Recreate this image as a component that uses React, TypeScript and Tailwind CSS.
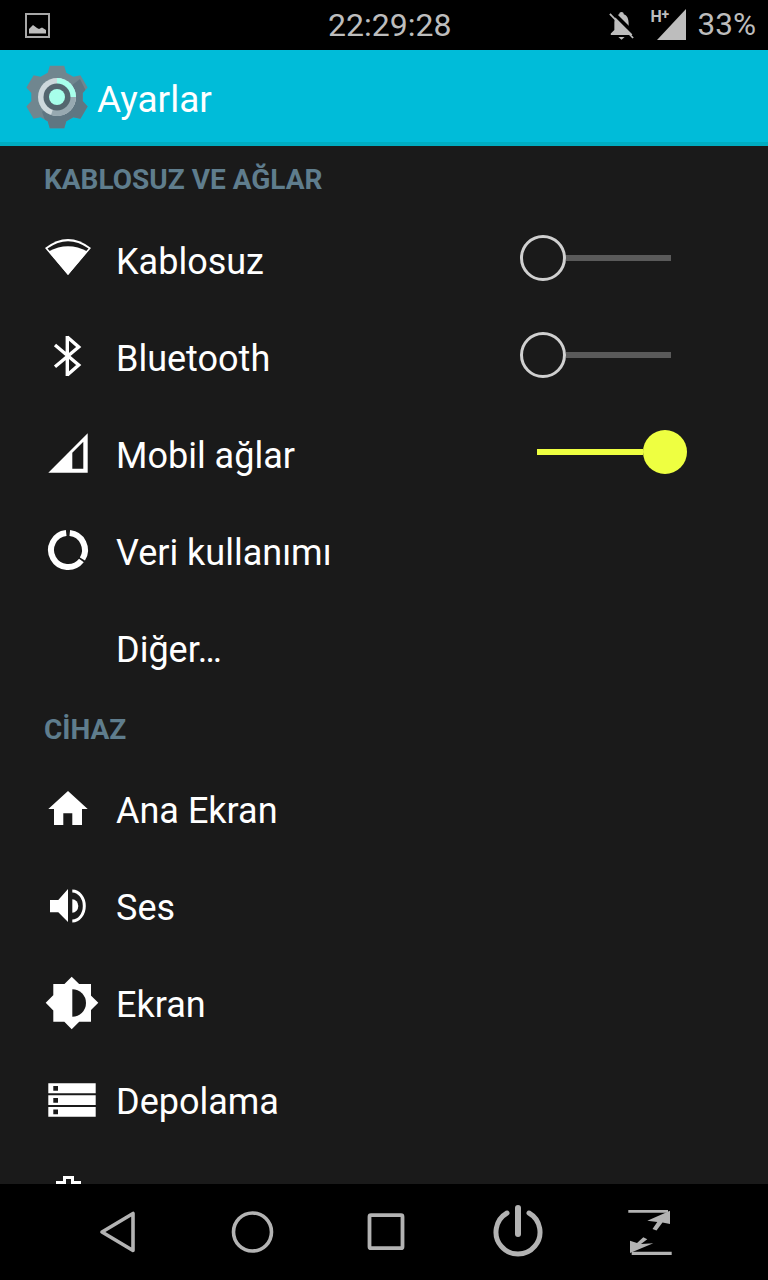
const BG = "#1a1a1a";

function gearPoints() {
  const pts: string[] = [];
  const cx = 37, cy = 38;
  for (let i = 0; i < 6; i++) {
    const a = (i * 60 - 90) * Math.PI / 180;
    const t = (o: number, r: number) => {
      const b = a + (o * Math.PI) / 180;
      pts.push(`${(cx + r * Math.cos(b)).toFixed(1)},${(cy + r * Math.sin(b)).toFixed(1)}`);
    };
    t(-21, 26); t(-13, 32); t(13, 32); t(21, 26);
  }
  return pts.join(" ");
}

function Gear() {
  const p = gearPoints();
  return (
    <svg width="75" height="75" viewBox="0 0 75 75" className="ml-[20px] mt-[-2px] shrink-0">
      <defs>
        <clipPath id="gearClip"><polygon points={p} /></clipPath>
      </defs>
      <polygon points={p} fill="#70868f" />
      <polygon points="37,38 60,20 75,50 50,75 30,75 22,53" fill="#5f7682" clipPath="url(#gearClip)" />
      <circle cx="37" cy="38" r="19" fill="#cdd8dc" />
      <path d="M37,38 L56,38 A19,19 0 0 1 31,56 Z" fill="#97a9b1" />
      <path d="M37,38 L37,19 A19,19 0 0 1 56,38 Z" fill="#a7ffeb" />
      <circle cx="37" cy="38" r="13.5" fill="#54666f" />
      <circle cx="37" cy="38" r="8" fill="#a7ffeb" />
    </svg>
  );
}

function Slashed() {
  return (
    <svg width="25" height="29" viewBox="0 0 28 32" className="shrink-0 mt-[1px]">
      <path d="M14,1 C15.5,1 16.5,2 16.5,3.5 C20.5,4.5 22,9 22,14 L22,21 L26,25 L26,26.5 L2,26.5 L2,25 L6,21 L6,14 C6,9 7.5,4.5 11.5,3.5 C11.5,2 12.5,1 14,1 Z" fill="#bdbdbd" />
      <path d="M10.5,29 L17.5,29 L14,32 Z" fill="#bdbdbd" />
      <path d="M3,0 L30,27" stroke="#000" strokeWidth="4" />
      <path d="M1,3 L27,30" stroke="#bdbdbd" strokeWidth="2" />
    </svg>
  );
}

function Wifi() {
  return (
    <svg width="73" height="64" viewBox="0 0 73 64">
      <path d="M1,19 Q24,1 47,19 L24,46 Z" fill="#fff" />
      <path d="M3.5,19.5 Q24,5 44.5,19.5 L24,43 Z" fill={BG} />
      <path d="M4.5,22.5 Q24,12 43.5,22.5 L24,46 Z" fill="#fff" />
    </svg>
  );
}
function Bluetooth() {
  return (
    <svg width="73" height="64" viewBox="0 0 73 64">
      <path d="M23.3,50 L23.3,10 M23.3,11 L34.7,21 L11,40.7 M11,19 L34.7,39 L23.3,49" fill="none" stroke="#fff" strokeWidth="3.4" />
    </svg>
  );
}
function Signal() {
  return (
    <svg width="73" height="64" viewBox="0 0 73 64">
      <path fillRule="evenodd" d="M4.3,49.7 L43.7,10.3 L43.7,49.7 Z M28.3,29.7 L39.3,18.7 L39.3,45.7 L28.3,45.7 Z" fill="#fff" />
    </svg>
  );
}
function DataUsage() {
  return (
    <svg width="73" height="64" viewBox="0 0 73 64">
      <path d="M25.8,13.1 A17,17 0 0 1 38.4,39 M37.4,40.5 A17,17 0 1 1 22.2,13.1" fill="none" stroke="#fff" strokeWidth="6" />
    </svg>
  );
}
function Home() {
  return (
    <svg width="73" height="64" viewBox="0 0 73 64">
      <path fillRule="evenodd" d="M24,13 L43.7,31 L38,31 L38,47 L28.3,47 L28.3,35.3 L19.3,35.3 L19.3,47 L10,47 L10,31 L4.3,31 Z" fill="#fff" />
    </svg>
  );
}
function Sound() {
  return (
    <svg width="73" height="64" viewBox="0 0 73 64">
      <path d="M6,25 L14.3,25 L24,14 L24,47 L14.3,37.3 L6,37.3 Z" fill="#fff" />
      <path d="M28.3,24.3 A6,6.7 0 0 1 28.3,37.7 Z" fill="#fff" />
      <path d="M28.3,16 A12,15 0 0 1 28.3,46" fill="none" stroke="#fff" strokeWidth="3" />
    </svg>
  );
}
function Brightness() {
  return (
    <svg width="73" height="64" viewBox="0 0 73 64">
      <path d="M9.3,12 H47 V49.7 H9.3 Z M27.7,4.7 L54.3,30.7 L27.7,57.3 L1.7,30.7 Z" fill="#fff" />
      <path d="M28.3,17.3 A13.7,13.7 0 0 1 28.3,44.7 Z" fill={BG} />
    </svg>
  );
}
function Storage() {
  return (
    <svg width="73" height="64" viewBox="0 0 73 64">
      <path fillRule="evenodd" d="M4.3,14.3 H51.7 V24.3 H4.3 Z M9.3,17 V21.7 H14 V17 Z M4.3,26.3 H51.7 V36 H4.3 Z M9.3,29 V33.7 H14 V29 Z M4.3,38 H51.7 V47.7 H4.3 Z M9.3,40.5 V45.2 H14 V40.5 Z" fill="#fff" />
    </svg>
  );
}
function Battery() {
  return (
    <svg width="73" height="64" viewBox="0 0 73 64">
      <path d="M13.5,52 V16.5 H20.5 V11.5 H28.5 V16.5 H35.5 V52 Z" fill="none" stroke="#fff" strokeWidth="3" />
    </svg>
  );
}

function SwitchOff() {
  return (
    <div className="flex items-center w-[151px] mt-[-6px]">
      <div className="w-[46px] h-[46px] rounded-full border-[3px] border-[#d0d0d0] shrink-0" />
      <div className="flex-1 h-[6px] bg-[#5a5a5a]" />
    </div>
  );
}
function SwitchOn() {
  return (
    <div className="flex items-center w-[150px] ml-[17px] mt-[-6px]">
      <div className="flex-1 h-[6px] bg-[#eeff41]" />
      <div className="w-[44px] h-[44px] rounded-full bg-[#eeff41] shrink-0" />
    </div>
  );
}

function Row({ icon, label, right }: { icon?: React.ReactNode; label: string; right?: React.ReactNode }) {
  return (
    <div className="flex items-center h-[97px] shrink-0 pl-[44px]">
      <div className="w-[73px] h-[64px] shrink-0">{icon}</div>
      <div className="w-[404px] ml-[-1px] mt-[2px] text-[36px] leading-[40px] text-white shrink-0">{label}</div>
      {right}
    </div>
  );
}

function Section({ title, lifted }: { title: string; lifted?: boolean }) {
  return (
    <div className={lifted ? "h-[64px] shrink-0 pl-[44px] pb-[2px] flex items-center text-[28px] leading-[32px] font-bold text-[#5f7d8d]" : "h-[64px] shrink-0 pl-[44px] flex items-center text-[28px] leading-[32px] font-bold text-[#5f7d8d]"}>
      {title}
    </div>
  );
}

export default function App() {
  return (
    <div className="w-[768px] h-[1280px] flex flex-col overflow-hidden bg-black font-['Roboto',sans-serif]">
      <div className="h-[50px] shrink-0 flex items-center pl-[25px] pr-[13px] bg-black text-[#bdbdbd]">
        <svg width="25" height="25" viewBox="0 0 25 25" className="shrink-0">
          <rect x="1" y="1" width="23" height="23" fill="none" stroke="#a8a8a8" strokeWidth="2" />
          <path d="M4,20.5 V16 L8,12 L12,15 L14,16 L17,14.5 L21,17 V20.5 Z" fill="#bdbdbd" />
        </svg>
        <div className="ml-[278px] text-[32px] leading-[50px]">22:29:28</div>
        <div className="ml-auto flex items-center">
          <Slashed />
          <div className="relative w-[35px] h-[32px] ml-[17px] mr-[12px]">
            <svg width="35" height="32" viewBox="0 0 35 32" className="absolute right-0 top-0">
              <path d="M6,31 L35,0 L35,31 Z" fill="#bdbdbd" />
            </svg>
            <span className="absolute left-[0px] top-[-2px] text-[16px] leading-[20px] font-bold">H</span>
            <span className="absolute left-[11px] top-[-5px] text-[14px] leading-[20px] font-bold">+</span>
          </div>
          <div className="text-[31.5px] leading-[50px] mr-[-1px]">33%</div>
        </div>
      </div>

      <div className="h-[96px] shrink-0 flex items-center bg-[#00bcd9] border-b-[4px] border-[#00acc1]">
        <div className="mt-[2px] flex items-center">
          <Gear />
          <div className="ml-[2px] mt-[6px] text-[37px] leading-[44px] text-white">Ayarlar</div>
        </div>
      </div>

      <div className="h-[1038px] shrink-0 overflow-hidden flex flex-col bg-[#1a1a1a]">
        <div className="h-[2.5px] shrink-0" />
        <Section title="KABLOSUZ VE AĞLAR" lifted />
        <Row icon={<Wifi />} label="Kablosuz" right={<SwitchOff />} />
        <Row icon={<Bluetooth />} label="Bluetooth" right={<SwitchOff />} />
        <Row icon={<Signal />} label="Mobil ağlar" right={<SwitchOn />} />
        <Row icon={<DataUsage />} label="Veri kullanımı" />
        <Row label="Diğer…" />
        <Section title="CİHAZ" />
        <Row icon={<Home />} label="Ana Ekran" />
        <Row icon={<Sound />} label="Ses" />
        <Row icon={<Brightness />} label="Ekran" />
        <Row icon={<Storage />} label="Depolama" />
        <Row icon={<Battery />} label="Güç" />
      </div>

      <div className="h-[96px] shrink-0 flex items-center pl-[86px] gap-[69px] bg-black">
        <svg width="64" height="64" viewBox="0 0 64 64" className="shrink-0">
          <path d="M16,32 L47,13.5 L47,50.5 Z" fill="none" stroke="#b3b3b3" strokeWidth="3.6" strokeLinejoin="round" />
        </svg>
        <svg width="64" height="64" viewBox="0 0 64 64" className="shrink-0">
          <circle cx="33.5" cy="32" r="19" fill="none" stroke="#b3b3b3" strokeWidth="3.6" />
        </svg>
        <svg width="64" height="64" viewBox="0 0 64 64" className="shrink-0">
          <rect x="17.5" y="15.2" width="33" height="33" rx="1.5" fill="none" stroke="#b3b3b3" strokeWidth="3.8" />
        </svg>
        <svg width="64" height="64" viewBox="0 0 64 64" className="shrink-0">
          <path d="M22,13 A22,22 0 1 0 44,13" fill="none" stroke="#b3b3b3" strokeWidth="5" strokeLinecap="round" />
          <path d="M33,8 L33,34" fill="none" stroke="#b3b3b3" strokeWidth="6" strokeLinecap="round" />
        </svg>
        <svg width="64" height="64" viewBox="0 0 64 64" className="shrink-0">
          <path d="M10.3,10 H50 V12.7 H10.3 Z M13.7,51.7 H53.7 V55 H13.7 Z" fill="#b3b3b3" />
          <path d="M52,10.7 L29.3,20.7 L39.3,22 L34.5,29 L38.5,30.5 L44.5,22.5 L52,24 Z" fill="#b3b3b3" />
          <path d="M12,53 L12,40.7 L19,43 L25.3,37.3 L29.3,39.3 L23,44 L35.3,43.3 Z" fill="#b3b3b3" />
        </svg>
      </div>
    </div>
  );
}
